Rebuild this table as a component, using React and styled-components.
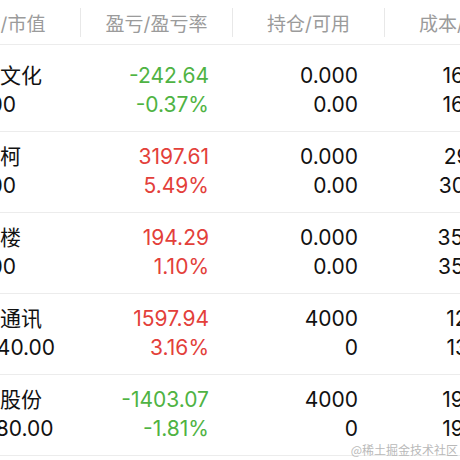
import React from "react";
import styled, { createGlobalStyle } from "styled-components";

const GlobalStyle = createGlobalStyle`
  html, body {
    margin: 0;
    padding: 0;
    background: #fff;
  }
  body {
    font-family: Inter, "Noto Sans CJK SC", sans-serif;
  }
`;

const rows = [
    { name: "华谊文化", value: "0.000", pl: "-242.64", rate: "-0.37%", hold: "0.000", avail: "0.00", cost: "16.520", price: "16.380" },
    { name: "美达柯", value: "0.000", pl: "3197.61", rate: "5.49%", hold: "0.000", avail: "0.00", cost: "29.130", price: "30.730" },
    { name: "茂业楼", value: "0.000", pl: "194.29", rate: "1.10%", hold: "0.000", avail: "0.00", cost: "35.240", price: "35.630" },
    { name: "中兴通讯", value: "52040.00", pl: "1597.94", rate: "3.16%", hold: "4000", avail: "0", cost: "12.610", price: "13.010" },
    { name: "中信股份", value: "76080.00", pl: "-1403.07", rate: "-1.81%", hold: "4000", avail: "0", cost: "19.380", price: "19.020" },
];

const Viewport = styled.div`
  position: relative;
  width: 460px;
  height: 460px;
  overflow: hidden;
  background: #fff;
`;

// the table is scrolled sideways, so the first column is partly hidden
const Table = styled.div`
  width: 608px;
  margin-left: -72px;
`;

const HeaderRow = styled.div`
  display: grid;
  grid-template-columns: repeat(4, 152px);
  align-items: center;
  height: 44px;
  border-bottom: 1px solid #ececec;
`;

const HeaderCell = styled.div`
  height: 29px;
  display: flex;
  align-items: center;
  justify-content: center;
  font-size: 19px;
  color: #9b9b9b;
  font-family: Inter, "Noto Sans CJK SC", sans-serif;
  border-left: ${p => (p.first ? "none" : "1px solid #e8e8e8")};
`;

const Body = styled.div`
  padding-top: 6px;
`;

const Row = styled.div`
  display: grid;
  grid-template-columns: repeat(4, 152px);
  box-sizing: border-box;
  height: 81px;
  padding-bottom: 3px;
  align-content: center;
  border-bottom: 1px solid #ececec;
`;

const Cell = styled.div`
  display: flex;
  flex-direction: column;
  align-items: ${p => (p.left ? "flex-start" : "flex-end")};
  padding: ${p => (p.left ? "0 0 0 30px" : `0 ${p.pad || 24}px 0 0`)};
`;

const Line = styled.span`
  font-size: 21px;
  line-height: 29px;
  white-space: nowrap;
  color: ${p => (p.tone === "up" ? "#e3403a" : p.tone === "down" ? "#4fb343" : "#111")};
`;

const Watermark = styled.div`
  position: absolute;
  right: 2px;
  bottom: 2px;
  font-size: 12px;
  color: #b9b9b9;
  font-family: "Noto Sans CJK SC", sans-serif;
`;

const tone = v => (v.startsWith("-") ? "down" : "up");

export default function App() {
    return (
        <>
            <GlobalStyle />
            <Viewport>
                <Table>
                    <HeaderRow>
                        <HeaderCell first>名称/市值</HeaderCell>
                        <HeaderCell>盈亏/盈亏率</HeaderCell>
                        <HeaderCell>持仓/可用</HeaderCell>
                        <HeaderCell>成本/现价</HeaderCell>
                    </HeaderRow>
                    <Body>
                        {rows.map(r => (
                            <Row key={r.name}>
                                <Cell left>
                                    <Line>{r.name}</Line>
                                    <Line>{r.value}</Line>
                                </Cell>
                                <Cell pad={23}>
                                    <Line tone={tone(r.pl)}>{r.pl}</Line>
                                    <Line tone={tone(r.pl)}>{r.rate}</Line>
                                </Cell>
                                <Cell pad={26}>
                                    <Line>{r.hold}</Line>
                                    <Line>{r.avail}</Line>
                                </Cell>
                                <Cell pad={28}>
                                    <Line>{r.cost}</Line>
                                    <Line>{r.price}</Line>
                                </Cell>
                            </Row>
                        ))}
                    </Body>
                </Table>
                <Watermark>@稀土掘金技术社区</Watermark>
            </Viewport>
        </>
    );
}
